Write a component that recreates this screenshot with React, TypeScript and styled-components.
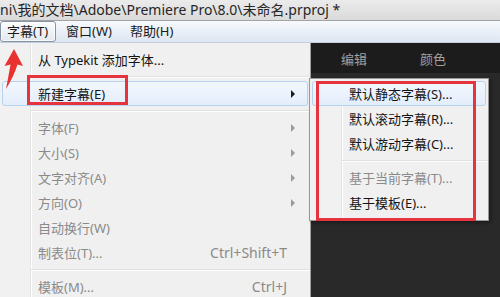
import styled, { createGlobalStyle } from 'styled-components'

const GlobalStyle = createGlobalStyle`
  html, body {
    margin: 0;
    padding: 0;
    overflow: hidden;
    background: #282828;
  }
`

const Window = styled.div`
  position: relative;
  width: 500px;
  height: 297px;
  overflow: hidden;
  display: flex;
  flex-direction: column;
  font-family: 'Noto Sans', 'Noto Sans CJK SC', sans-serif;
  font-size: 13px;
  color: #1a1a1a;
`

const TitleBar = styled.div`
  height: 20px;
  flex: none;
  line-height: 20px;
  font-size: 14px;
  white-space: nowrap;
  background: linear-gradient(#ebebeb, #dadada);
  border-bottom: 1px solid #a3a3a3;
  color: #262626;
`

const MenuBar = styled.div`
  height: 21px;
  flex: none;
  display: flex;
  align-items: center;
  gap: 3px;
  background: linear-gradient(#f7f9fc, #dde6f2);
  border-bottom: 1px solid #c6ced9;
`

const MenuBarItem = styled.div<{ $active?: boolean }>`
  height: 19px;
  line-height: 19px;
  padding: 0 7px 0 6px;
  border: 1px solid ${({ $active }) => ($active ? '#8693a6' : 'transparent')};
  border-radius: 3px;
  background: ${({ $active }) => ($active ? 'linear-gradient(#fbfcfd, #e4e8ee)' : 'none')};
  box-shadow: ${({ $active }) => ($active ? 'inset 0 0 0 1px rgba(255,255,255,0.7)' : 'none')};
`

const Workspace = styled.div`
  flex: 1;
  display: flex;
  min-height: 0;
`

const Dropdown = styled.div`
  width: 311px;
  flex: none;
  padding-top: 4px;
  box-sizing: border-box;
  border-right: 1px solid #a0a0a0;
  background: linear-gradient(
    to right,
    #f1f1f1 0,
    #f1f1f1 30px,
    #e2e3e3 30px,
    #e2e3e3 31px,
    #ffffff 31px,
    #ffffff 32px,
    #f0f0f0 32px
  );
`

const MenuItem = styled.div<{ $disabled?: boolean; $hover?: boolean; $indent?: number }>`
  height: 25px;
  box-sizing: border-box;
  display: flex;
  align-items: center;
  padding: 0 10px 0 ${({ $indent }) => $indent ?? 35}px;
  margin: 0 2px;
  color: ${({ $disabled }) => ($disabled ? '#8a8a8a' : '#141414')};
  border: 1px solid ${({ $hover }) => ($hover ? '#b4d3f0' : 'transparent')};
  border-radius: 3px;
  background: ${({ $hover }) => ($hover ? 'linear-gradient(#f2f7fd, #e3eefb)' : 'none')};
  white-space: nowrap;
`

const Shortcut = styled.span`
  margin-left: auto;
  padding-right: 10px;
  font-size: 14px;
`

const SubArrow = styled.span<{ $disabled?: boolean }>`
  margin-left: auto;
  margin-right: 2px;
  width: 0;
  height: 0;
  border-top: 4px solid transparent;
  border-bottom: 4px solid transparent;
  border-left: 4px solid ${({ $disabled }) => ($disabled ? '#9a9a9a' : '#1a1a1a')};
`

const Separator = styled.div<{ $indent?: number }>`
  height: 9px;
  display: flex;
  align-items: center;
  padding-left: ${({ $indent }) => $indent ?? 31}px;
  &::after {
    content: '';
    flex: 1;
    height: 1px;
    background: #e0e0e0;
    border-bottom: 1px solid #ffffff;
  }
`

const DarkPanel = styled.div`
  flex: 1;
  display: flex;
  flex-direction: column;
  background: #292929;
`

const PanelHeader = styled.div`
  height: 30px;
  flex: none;
  display: flex;
  align-items: center;
  gap: 53px;
  padding-left: 30px;
  background: #1c1c1c;
  color: #a0a0a0;
  font-size: 13px;
`

const Submenu = styled.div`
  position: absolute;
  left: 309px;
  top: 78px;
  width: 180px;
  height: 143px;
  box-sizing: border-box;
  padding-top: 2px;
  border: 1px solid #979797;
  box-shadow: 2px 2px 3px rgba(0, 0, 0, 0.35);
  background: linear-gradient(
    to right,
    #f1f1f1 0,
    #f1f1f1 31px,
    #e2e3e3 31px,
    #e2e3e3 32px,
    #ffffff 32px,
    #ffffff 33px,
    #f0f0f0 33px
  );
`

const RedFrame = styled.div<{ $x: number; $y: number; $w: number; $h: number }>`
  position: absolute;
  left: ${({ $x }) => $x}px;
  top: ${({ $y }) => $y}px;
  width: ${({ $w }) => $w}px;
  height: ${({ $h }) => $h}px;
  box-sizing: border-box;
  border: 3px solid #e5343d;
  pointer-events: none;
`

const Pointer = styled.svg`
  position: absolute;
  left: 0;
  top: 44px;
`

const RedArrow = () => (
  <Pointer width="28" height="50" viewBox="0 0 28 50">
    <path
      d="M14 5 L23 22 L17.5 20.5 Q14 32 6 45 Q8.5 32 10.5 20.5 L4.5 22 Z"
      fill="#e8322f"
    />
  </Pointer>
)

const App = () => {
  return (
    <>
      <GlobalStyle />
      <Window>
        <TitleBar>ni\我的文档\Adobe\Premiere Pro\8.0\未命名.prproj *</TitleBar>
        <MenuBar>
          <MenuBarItem $active>字幕(T)</MenuBarItem>
          <MenuBarItem>窗口(W)</MenuBarItem>
          <MenuBarItem>帮助(H)</MenuBarItem>
        </MenuBar>
        <Workspace>
          <Dropdown>
            <MenuItem>从 Typekit 添加字体...</MenuItem>
            <Separator />
            <MenuItem $hover>
              新建字幕(E)
              <SubArrow />
            </MenuItem>
            <Separator />
            <MenuItem $disabled>
              字体(F)
              <SubArrow $disabled />
            </MenuItem>
            <MenuItem $disabled>
              大小(S)
              <SubArrow $disabled />
            </MenuItem>
            <MenuItem $disabled>
              文字对齐(A)
              <SubArrow $disabled />
            </MenuItem>
            <MenuItem $disabled>
              方向(O)
              <SubArrow $disabled />
            </MenuItem>
            <MenuItem $disabled>自动换行(W)</MenuItem>
            <MenuItem $disabled>
              制表位(T)...
              <Shortcut>Ctrl+Shift+T</Shortcut>
            </MenuItem>
            <Separator />
            <MenuItem $disabled>
              模板(M)...
              <Shortcut>Ctrl+J</Shortcut>
            </MenuItem>
          </Dropdown>
          <DarkPanel>
            <PanelHeader>
              <span>编辑</span>
              <span>颜色</span>
            </PanelHeader>
          </DarkPanel>
        </Workspace>
        <Submenu>
          <MenuItem $hover $indent={36}>默认静态字幕(S)...</MenuItem>
          <MenuItem $indent={36}>默认滚动字幕(R)...</MenuItem>
          <MenuItem $indent={36}>默认游动字幕(C)...</MenuItem>
          <Separator $indent={32} />
          <MenuItem $disabled $indent={36}>基于当前字幕(T)...</MenuItem>
          <MenuItem $indent={36}>基于模板(E)...</MenuItem>
        </Submenu>
        <RedFrame $x={27} $y={75} $w={101} $h={30} />
        <RedFrame $x={316} $y={81} $w={160} $h={140} />
        <RedArrow />
      </Window>
    </>
  )
}

export default App
